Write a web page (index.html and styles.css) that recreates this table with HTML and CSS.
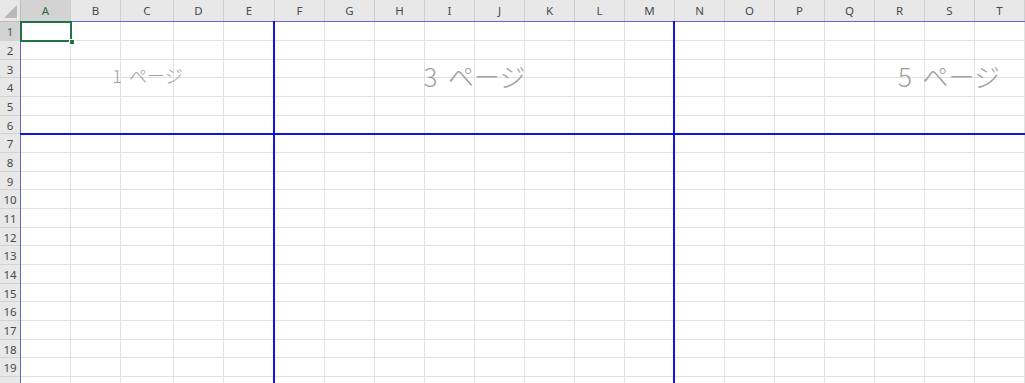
FILE: index.html
```html
<!DOCTYPE html>
<html lang="ja">
<head>
<meta charset="utf-8">
<title>Sheet</title>
<link rel="stylesheet" href="styles.css">
</head>
<body>
<div class="sheet">
  <div class="row head">
    <div class="corner"><svg width="13" height="13" viewBox="0 0 13 13"><polygon points="13,0 13,13 0,13" fill="#b9b9b9"/></svg></div>
    <span class="sel">A</span><span>B</span><span>C</span><span>D</span><span>E</span><span>F</span><span>G</span><span>H</span><span>I</span><span>J</span><span>K</span><span>L</span><span>M</span><span>N</span><span>O</span><span>P</span><span>Q</span><span>R</span><span>S</span><span>T</span>
  </div>
  <div class="body">
    <div class="row"><b class="sel">1</b><span></span><span></span><span></span><span></span><span></span><span></span><span></span><span></span><span></span><span></span><span></span><span></span><span></span><span></span><span></span><span></span><span></span><span></span><span></span><span></span></div>
    <div class="row"><b>2</b><span></span><span></span><span></span><span></span><span></span><span></span><span></span><span></span><span></span><span></span><span></span><span></span><span></span><span></span><span></span><span></span><span></span><span></span><span></span><span></span></div>
    <div class="row"><b>3</b><span></span><span></span><span></span><span></span><span></span><span></span><span></span><span></span><span></span><span></span><span></span><span></span><span></span><span></span><span></span><span></span><span></span><span></span><span></span><span></span></div>
    <div class="row"><b>4</b><span></span><span></span><span></span><span></span><span></span><span></span><span></span><span></span><span></span><span></span><span></span><span></span><span></span><span></span><span></span><span></span><span></span><span></span><span></span><span></span></div>
    <div class="row"><b>5</b><span></span><span></span><span></span><span></span><span></span><span></span><span></span><span></span><span></span><span></span><span></span><span></span><span></span><span></span><span></span><span></span><span></span><span></span><span></span><span></span></div>
    <div class="row"><b>6</b><span></span><span></span><span></span><span></span><span></span><span></span><span></span><span></span><span></span><span></span><span></span><span></span><span></span><span></span><span></span><span></span><span></span><span></span><span></span><span></span></div>
    <div class="row"><b>7</b><span></span><span></span><span></span><span></span><span></span><span></span><span></span><span></span><span></span><span></span><span></span><span></span><span></span><span></span><span></span><span></span><span></span><span></span><span></span><span></span></div>
    <div class="row"><b>8</b><span></span><span></span><span></span><span></span><span></span><span></span><span></span><span></span><span></span><span></span><span></span><span></span><span></span><span></span><span></span><span></span><span></span><span></span><span></span><span></span></div>
    <div class="row"><b>9</b><span></span><span></span><span></span><span></span><span></span><span></span><span></span><span></span><span></span><span></span><span></span><span></span><span></span><span></span><span></span><span></span><span></span><span></span><span></span><span></span></div>
    <div class="row"><b>10</b><span></span><span></span><span></span><span></span><span></span><span></span><span></span><span></span><span></span><span></span><span></span><span></span><span></span><span></span><span></span><span></span><span></span><span></span><span></span><span></span></div>
    <div class="row"><b>11</b><span></span><span></span><span></span><span></span><span></span><span></span><span></span><span></span><span></span><span></span><span></span><span></span><span></span><span></span><span></span><span></span><span></span><span></span><span></span><span></span></div>
    <div class="row"><b>12</b><span></span><span></span><span></span><span></span><span></span><span></span><span></span><span></span><span></span><span></span><span></span><span></span><span></span><span></span><span></span><span></span><span></span><span></span><span></span><span></span></div>
    <div class="row"><b>13</b><span></span><span></span><span></span><span></span><span></span><span></span><span></span><span></span><span></span><span></span><span></span><span></span><span></span><span></span><span></span><span></span><span></span><span></span><span></span><span></span></div>
    <div class="row"><b>14</b><span></span><span></span><span></span><span></span><span></span><span></span><span></span><span></span><span></span><span></span><span></span><span></span><span></span><span></span><span></span><span></span><span></span><span></span><span></span><span></span></div>
    <div class="row"><b>15</b><span></span><span></span><span></span><span></span><span></span><span></span><span></span><span></span><span></span><span></span><span></span><span></span><span></span><span></span><span></span><span></span><span></span><span></span><span></span><span></span></div>
    <div class="row"><b>16</b><span></span><span></span><span></span><span></span><span></span><span></span><span></span><span></span><span></span><span></span><span></span><span></span><span></span><span></span><span></span><span></span><span></span><span></span><span></span><span></span></div>
    <div class="row"><b>17</b><span></span><span></span><span></span><span></span><span></span><span></span><span></span><span></span><span></span><span></span><span></span><span></span><span></span><span></span><span></span><span></span><span></span><span></span><span></span><span></span></div>
    <div class="row"><b>18</b><span></span><span></span><span></span><span></span><span></span><span></span><span></span><span></span><span></span><span></span><span></span><span></span><span></span><span></span><span></span><span></span><span></span><span></span><span></span><span></span></div>
    <div class="row"><b>19</b><span></span><span></span><span></span><span></span><span></span><span></span><span></span><span></span><span></span><span></span><span></span><span></span><span></span><span></span><span></span><span></span><span></span><span></span><span></span><span></span></div>
    <div class="row"><b></b><span></span><span></span><span></span><span></span><span></span><span></span><span></span><span></span><span></span><span></span><span></span><span></span><span></span><span></span><span></span><span></span><span></span><span></span><span></span><span></span></div>
  </div>

  <div class="print-area"></div>
  <div class="page-label p1"><span class="num">1</span>ページ</div>
  <div class="page-label p3"><span class="num">3</span>ページ</div>
  <div class="page-label p5"><span class="num">5</span>ページ</div>
  <div class="break-v b1"></div>
  <div class="break-v b2"></div>
  <div class="break-h"></div>
  <div class="selection"><div class="handle"></div></div>
</div>
</body>
</html>
```

FILE: styles.css
```css
* { box-sizing: border-box; }

html, body {
  margin: 0;
  padding: 0;
  width: 1025px;
  height: 383px;
  overflow: hidden;
  background: #ffffff;
}

.sheet {
  position: relative;
  width: 1025px;
  height: 383px;
  overflow: hidden;
  font-family: "Noto Sans", "Noto Sans CJK JP", sans-serif;
}

.row {
  display: grid;
  grid-template-columns: 21px 50px 50px 53px 50px 51px repeat(15, 50px);
  height: 19px;
}

.body .row:nth-child(3n) { height: 18px; }

.row > span {
  border-right: 1px solid #e1e1e1;
  border-bottom: 1px solid #e1e1e1;
}

.row > b {
  font-weight: normal;
  background: #e8e8e8;
  border-right: 1px solid #bdbdbd;
  border-bottom: 1px solid #d2d2d2;
  color: #4a4a4a;
  font-size: 11.5px;
  display: flex;
  align-items: center;
  justify-content: center;
  padding-top: 1px;
}

.row > b.sel {
  background: #d3d3d3;
  color: #2f6b48;
}

.head {
  height: 22px;
}

.head > span {
  background: #e8e8e8;
  border-right: 1px solid #cfcfcf;
  border-bottom: 1px solid #bdbdbd;
  color: #4a4a4a;
  font-size: 11.5px;
  display: flex;
  align-items: center;
  justify-content: center;
}

.head > span.sel {
  background: #d3d3d3;
  color: #2f6b48;
}

.corner {
  background: #e8e8e8;
  border-right: 1px solid #bdbdbd;
  border-bottom: 1px solid #bdbdbd;
  display: flex;
  align-items: flex-end;
  justify-content: flex-end;
  padding: 0 3px 3px 0;
}

.corner svg { display: block; }

.print-area {
  position: absolute;
  left: 20px;
  top: 21px;
  width: 1100px;
  height: 500px;
  border-top: 1px solid #6767d4;
  border-left: 1px solid #6767d4;
}

.break-v {
  position: absolute;
  top: 21px;
  width: 2px;
  height: 400px;
  background: #1414dc;
}

.b1 { left: 273px; }
.b2 { left: 673px; }

.break-h {
  position: absolute;
  left: 20px;
  top: 133px;
  width: 1100px;
  height: 2px;
  background: #1414dc;
}

.page-label {
  position: absolute;
  top: 22px;
  height: 106px;
  display: flex;
  align-items: center;
  justify-content: center;
  color: #a0a0a0;
  font-family: "Noto Sans CJK JP", sans-serif;
  font-weight: 300;
  white-space: nowrap;
}

.page-label .num { margin-right: 0.4em; }

.p1 { left: 21px; width: 253px; font-size: 18px; }
.p3 { left: 275px; width: 399px; font-size: 26px; }
.p5 { left: 675px; width: 548px; font-size: 26px; }

.selection {
  position: absolute;
  left: 20px;
  top: 21px;
  width: 52px;
  height: 21px;
  border: 2px solid #217346;
}

.handle {
  position: absolute;
  right: -5px;
  bottom: -5px;
  width: 6px;
  height: 6px;
  background: #217346;
  border: 1px solid #ffffff;
}
```
